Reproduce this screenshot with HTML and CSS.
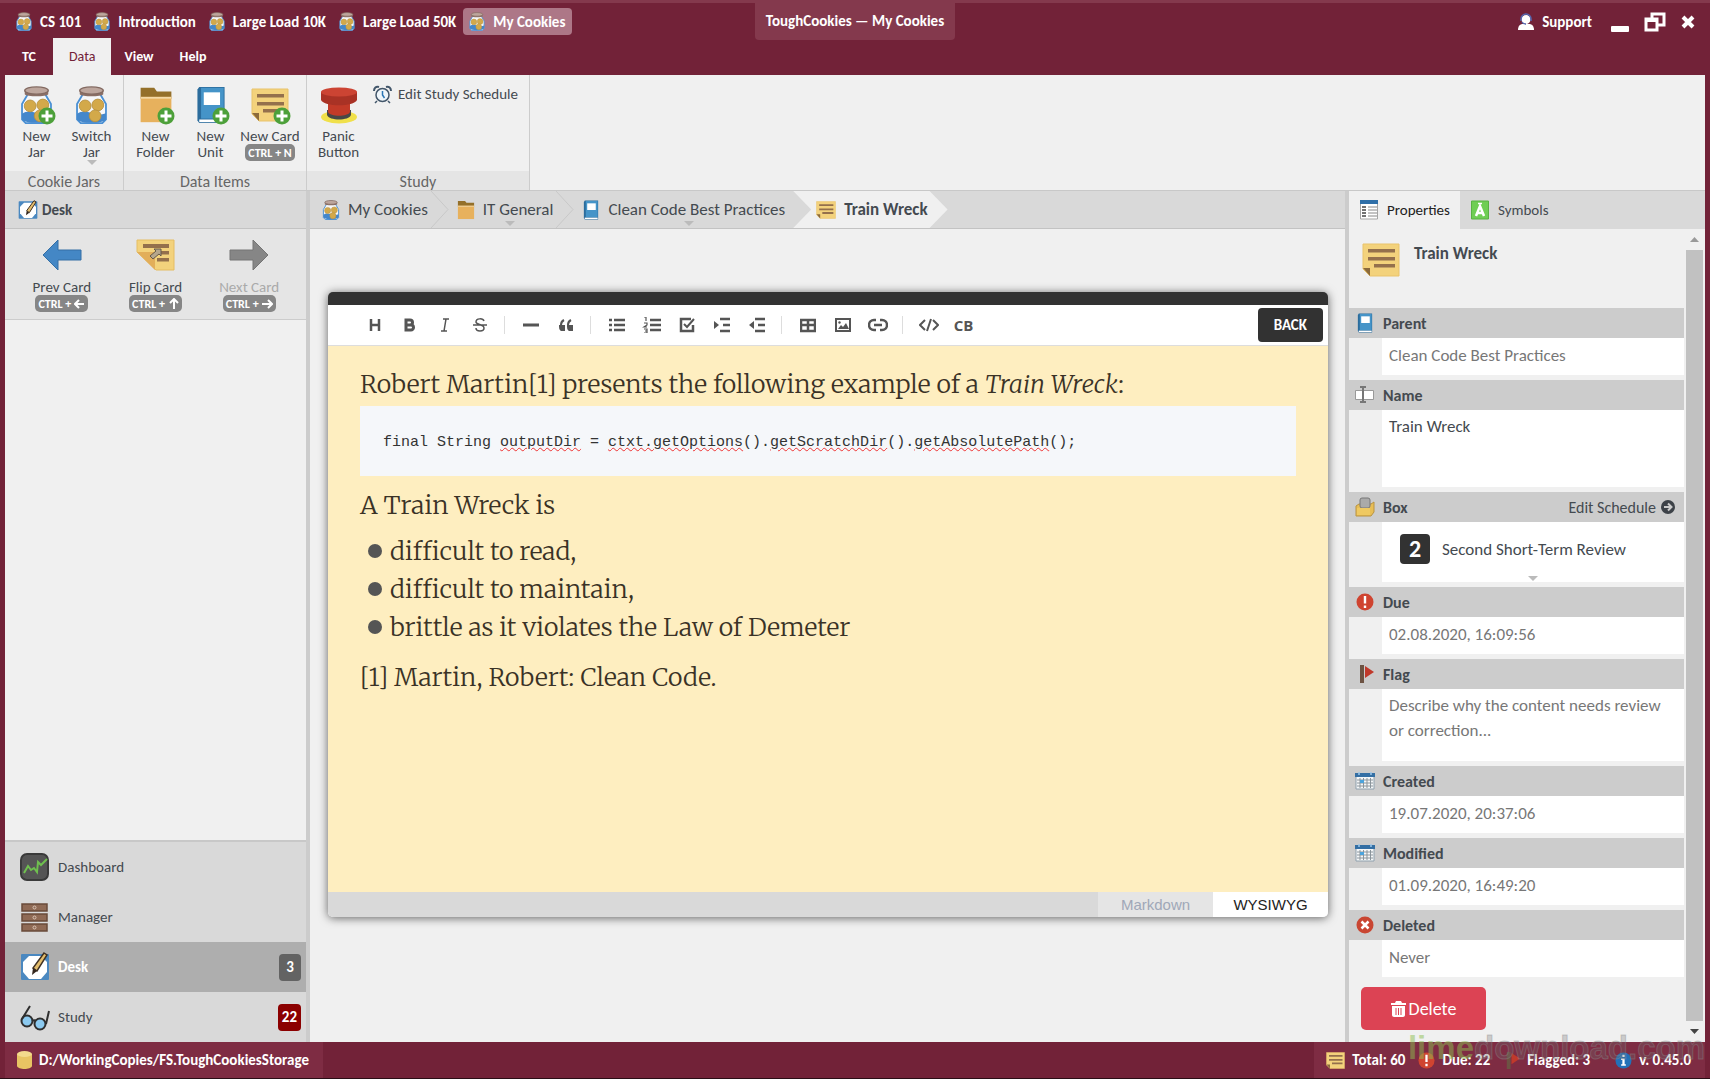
FILE: index.html
```html
<!DOCTYPE html>
<html lang="en">
<head>
  <meta charset="UTF-8" />
  <meta name="viewport" content="width=device-width, initial-scale=1" />
  <title>ToughCookies — My Cookies</title>
  <link rel="stylesheet" href="styles.css">
</head>
<body>
  <!-- shared icons -->
  <svg class="sprite" aria-hidden="true">
    <symbol id="i-jar" viewBox="0 0 36 42">
      <path d="M9 8 2 20v17l4 4h24l4-4V20L27 8z" fill="#f6f7f9" stroke="#4a90d4" stroke-width="2"/>
      <path d="M2 31c5-4 11-3 16-1s11 2 16 0v7c-3 5-29 5-32 0z" fill="#4487cb"/>
      <circle cx="11" cy="22" r="6.500" fill="#d3a94a" stroke="#b89243"/>
      <circle cx="25" cy="21" r="6.500" fill="#d3a94a" stroke="#b89243"/>
      <circle cx="22" cy="33" r="6.500" fill="#d3a94a" stroke="#b89243"/>
      <path d="M5 5v4c2 3 24 3 26 0V5z" fill="#8b6f66"/>
      <ellipse cx="18" cy="5" rx="13" ry="4" fill="#bda69d" stroke="#836a61" stroke-width="1.500"/>
    </symbol>
    <symbol id="i-folder" viewBox="0 0 36 42">
      <path d="M1 2h15l3 4h16v8H1z" fill="#94702a"/>
      <path d="M1 12h34v28H1z" fill="#e7b15d"/>
      <path d="M1 12h34v2H1z" fill="#f3d9a6"/>
    </symbol>
    <symbol id="i-book" viewBox="0 0 32 42">
      <path d="M3 1h28v40H3L1 38V4z" fill="#2b6c9c"/>
      <path d="M5 2h25v34H5z" fill="#4594c8"/>
      <path d="M3 37h27v3H3z" fill="#fff"/>
      <path d="M8 7h18v14H8z" fill="#fff"/>
    </symbol>
    <symbol id="i-card" viewBox="0 0 38 34">
      <path d="M1 1h36v32H8l-7-7z" fill="#f3d27c" stroke="#e9c36a"/>
      <path d="M1 25h7v8z" fill="#8b6a3b"/>
      <path d="M6 6h27v3.500H6zM6 14h27v3.500H6zM12 21h21v3.500H12z" fill="#94704c"/>
    </symbol>
    <symbol id="i-plus" viewBox="0 0 18 18">
      <circle cx="9" cy="9" r="8.500" fill="#4da03a"/>
      <path d="M7.500 3.500h3v4h4v3h-4v4h-3v-4h-4v-3h4z" fill="#fff"/>
    </symbol>
    <symbol id="i-desk" viewBox="0 0 30 30">
      <rect x="1" y="2" width="28" height="26" rx="1" fill="#4a88c0"/>
      <path d="M9 4h12l6 6v10l-6 7H9l-6-7V10z" fill="#fff"/>
      <path d="m24 1 3 2-10 16-4-3z" fill="#e3bd6c" stroke="#3f3023" stroke-width="1.500"/>
      <path d="m13 16 4 3-5 4z" fill="#33261d"/>
    </symbol>
    <symbol id="i-alert" viewBox="0 0 18 18">
      <circle cx="9" cy="9" r="8.500" fill="#cf4430"/>
      <path d="M7.800 3h2.400v7.500H7.800zM7.800 12.500h2.400V15H7.800z" fill="#fff"/>
    </symbol>
    <symbol id="i-flag" viewBox="0 0 18 18">
      <path d="M4 0h4v18H4z" fill="#6d5343"/>
      <path d="M9 1v12l9-6z" fill="#c0392b"/>
    </symbol>
    <symbol id="i-calendar" viewBox="0 0 20 18">
      <path d="M1 4h18v13H1z" fill="#f5f7f8" stroke="#8fa0ad"/>
      <path d="M0 1h20v4H0z" fill="#346fa4"/>
      <path d="M4 0v3M16 0v3" stroke="#9cc8ea" stroke-width="1.500"/>
      <path d="M2 8h16M2 11h16M2 14h16M5 6v10M8.500 6v10M12 6v10M15.500 6v10" stroke="#8b959c" stroke-width="1"/>
      <path d="M5 8h4v3H5z" fill="#4ba3dc"/>
    </symbol>
  </svg>

  <div class="app">
    <header class="titlebar">
      <nav class="jars" aria-label="Open jars">
        <button class="jar"><svg class="jar-icon"><use href="#i-jar"/></svg>CS 101</button>
        <button class="jar"><svg class="jar-icon"><use href="#i-jar"/></svg>Introduction</button>
        <button class="jar"><svg class="jar-icon"><use href="#i-jar"/></svg>Large Load 10K</button>
        <button class="jar"><svg class="jar-icon"><use href="#i-jar"/></svg>Large Load 50K</button>
        <button class="jar active"><svg class="jar-icon"><use href="#i-jar"/></svg>My Cookies</button>
      </nav>
      <h1 class="window-title">ToughCookies — My Cookies</h1>
      <div class="window-tools">
        <button class="support">
          <svg width="16" height="18" viewBox="0 0 16 18"><path d="M0 17c0-4 2-6 5-6h6c3 0 5 2 5 6z" fill="#fff"/><circle cx="8" cy="6.500" r="4.500" fill="#fff"/><path d="M3 8V6a5 5 0 0 1 10 0v2M4 9c1 2 2 2 4 2" fill="none" stroke="#5668b0" stroke-width="1.500"/></svg>
          Support
        </button>
        <button class="win" aria-label="Minimize"><svg width="18" height="20"><rect y="14" width="18" height="6" rx="1" fill="#fff"/></svg></button>
        <button class="win" aria-label="Restore"><svg width="22" height="20" viewBox="0 0 22 20"><path d="M8 5.500V2h12v11h-6M2 7h11v11H2z" fill="none" stroke="#fff" stroke-width="3"/><path d="M2 6h11v4H2z" fill="#fff"/></svg></button>
        <button class="win" aria-label="Close"><svg width="14" height="14" viewBox="0 0 14 14"><path d="m2 2 10 10M12 2 2 12" stroke="#fff" stroke-width="4"/></svg></button>
      </div>
    </header>

    <nav class="menu">
      <button class="menu-item">TC</button>
      <button class="menu-item active">Data</button>
      <button class="menu-item">View</button>
      <button class="menu-item">Help</button>
    </nav>

    <div class="ribbon">
      <section class="group">
        <div class="tools">
          <button class="tool"><span class="tool-icon"><svg width="33" height="38"><use href="#i-jar"/></svg><svg class="plus"><use href="#i-plus"/></svg></span>New<br>Jar</button>
          <button class="tool"><span class="tool-icon"><svg width="33" height="38"><use href="#i-jar"/></svg></span>Switch<br>Jar<span class="caret"></span></button>
        </div>
        <h2 class="group-name">Cookie Jars</h2>
      </section>
      <section class="group">
        <div class="tools">
          <button class="tool"><span class="tool-icon"><svg width="34" height="38"><use href="#i-folder"/></svg><svg class="plus"><use href="#i-plus"/></svg></span>New<br>Folder</button>
          <button class="tool"><span class="tool-icon"><svg width="30" height="38"><use href="#i-book"/></svg><svg class="plus"><use href="#i-plus"/></svg></span>New<br>Unit</button>
          <button class="tool wide"><span class="tool-icon"><svg width="38" height="34"><use href="#i-card"/></svg><svg class="plus"><use href="#i-plus"/></svg></span>New Card<kbd>CTRL + N</kbd></button>
        </div>
        <h2 class="group-name">Data Items</h2>
      </section>
      <section class="group">
        <div class="tools">
          <button class="tool"><span class="tool-icon">
            <svg width="38" height="38" viewBox="0 0 38 38"><ellipse cx="19" cy="31" rx="18" ry="6.500" fill="#f0e04a"/><path d="M7 24v5c2 6 22 6 24 0v-5z" fill="#474747"/><path d="M8 15v11c2 5 20 5 22 0V15z" fill="#c23a28"/><path d="M1 6v8c3 7 33 7 36 0V6z" fill="#a93225"/><ellipse cx="19" cy="6" rx="18" ry="4.500" fill="#cc4433"/></svg>
          </span>Panic<br>Button</button>
          <button class="tool-line">
            <svg width="19" height="19" viewBox="0 0 19 19" fill="none"><circle cx="9.500" cy="10" r="6.500" fill="#eef5fa" stroke="#42566a" stroke-width="1.500"/><path d="M9.500 6v4l2 3" stroke="#2a75b5" stroke-width="1.500"/><path d="M1 6c0-3 2-5 5-4M18 6c0-3-2-5-5-4" stroke="#42566a" stroke-width="2"/><path d="m4 16-2 2M15 16l2 2" stroke="#42566a" stroke-width="1.500"/></svg>
            Edit Study Schedule
          </button>
        </div>
        <h2 class="group-name">Study</h2>
      </section>
    </div>

    <div class="workspace">
      <aside class="sidebar">
        <h2 class="pane-head"><svg width="20" height="20"><use href="#i-desk"/></svg>Desk</h2>
        <div class="card-nav">
          <button class="step">
            <svg width="40" height="32" viewBox="0 0 40 32"><path d="M1 16 16 1v10h23v10H16v10z" fill="#4487c5" stroke="#356fa5"/></svg>
            Prev Card<kbd>CTRL + <svg class="key"><path d="M10 6H1M5 2 1 6l4 4"/></svg></kbd>
          </button>
          <button class="step">
            <svg width="40" height="32" viewBox="0 0 40 32"><path d="M1 1h37v30H20L1 13z" fill="#f3d27c" stroke="#e5bd62"/><path d="M7 5h26v4H7zM20 12h13v3.500H20zM21 19h12v3.500H21z" fill="#94704c"/><path d="M1 13h18v18z" fill="#e2ae5a"/><path d="m14 17 6-5-2-2h7v7l-2-2-6 5z" fill="#b5a68c" stroke="#65594a"/></svg>
            Flip Card<kbd>CTRL + <svg class="key"><path d="M6 11V1M2 5l4-4 4 4"/></svg></kbd>
          </button>
          <button class="step" disabled>
            <svg width="40" height="32" viewBox="0 0 40 32"><path d="M39 16 24 1v10H1v10h23v10z" fill="#868686" stroke="#747474"/></svg>
            Next Card<kbd>CTRL + <svg class="key"><path d="M0 6h10M6 2l4 4-4 4"/></svg></kbd>
          </button>
        </div>
        <nav class="places">
          <a class="place" href="#"><svg width="30" height="30" viewBox="0 0 30 30"><rect x="1" y="2" width="27" height="26" rx="6" fill="#555" stroke="#3a3a3a" stroke-width="2"/><path d="m4 21 4-7 3 4 3-2 3 4 1-10 3 3 6-6" fill="none" stroke="#6fc04f" stroke-width="2"/></svg>Dashboard</a>
          <a class="place" href="#"><svg width="30" height="30" viewBox="0 0 30 30" fill="#8f6a55" stroke="#6a4b3a" stroke-width="1.500"><path d="M2 2h25v7H2zM2 12h25v7H2zM2 22h25v7H2z"/><g fill="#8f6a55" stroke="#d9c3b4" stroke-width="1"><circle cx="14.500" cy="5.500" r="1.500"/><circle cx="14.500" cy="15.500" r="1.500"/><circle cx="14.500" cy="25.500" r="1.500"/></g></svg>Manager</a>
          <a class="place active" href="#"><svg width="30" height="30"><use href="#i-desk"/></svg>Desk<span class="count">3</span></a>
          <a class="place" href="#"><svg width="30" height="30" viewBox="0 0 30 30" fill="none" stroke="#2f2f2f" stroke-width="2"><circle cx="7" cy="19" r="5.500" fill="#8ccaf0"/><circle cx="20" cy="22" r="5.500" fill="#8ccaf0"/><path d="m2 17 8-13M26 22l3-13M12 19c2-1 3-1 4 0"/></svg>Study<span class="count due">22</span></a>
        </nav>
      </aside>

      <main class="center">
        <nav class="crumbs" aria-label="Breadcrumb">
          <a class="crumb" href="#"><svg width="18" height="20"><use href="#i-jar"/></svg>My Cookies</a>
          <svg class="chevron" viewBox="0 0 18 37"><path d="M0 0l17 18.500L0 37"/></svg>
          <a class="crumb has-menu" href="#"><svg width="18" height="20"><use href="#i-folder"/></svg>IT General</a>
          <svg class="chevron" viewBox="0 0 18 37"><path d="M0 0l17 18.500L0 37"/></svg>
          <a class="crumb has-menu" href="#"><svg width="18" height="20"><use href="#i-book"/></svg>Clean Code Best Practices</a>
          <a class="crumb current" href="#" aria-current="page"><svg width="20" height="20"><use href="#i-card"/></svg>Train Wreck</a>
        </nav>

        <div class="stage">
          <section class="editor">
            <div class="toolbar">
              <button class="fmt" aria-label="Heading"><svg viewBox="0 0 16 16"><path d="M4 2v12M12 2v12M4 8h8" stroke-width="2.500"/></svg></button>
              <button class="fmt" aria-label="Bold"><svg viewBox="0 0 16 16"><path d="M4 3v10h5a2.500 2.500 0 0 0 0-5H4h4a2.500 2.500 0 0 0 0-5z" stroke-width="3"/></svg></button>
              <button class="fmt" aria-label="Italic"><svg viewBox="0 0 16 16"><path d="M6 2h6M4 14h6M9 2 7 14" stroke-width="1.500"/></svg></button>
              <button class="fmt" aria-label="Strike"><svg viewBox="0 0 16 16"><path d="M12 4c-1-3-8-3-8 1 0 3 8 2 8 6 0 4-8 4-8 0M1 8h14" stroke-width="1.500"/></svg></button>
              <span class="sep"></span>
              <button class="fmt" aria-label="Line"><svg viewBox="0 0 16 16"><path d="M0 8h16" stroke-width="3"/></svg></button>
              <button class="fmt" aria-label="Blockquote"><svg viewBox="0 0 16 16"><path d="M6 3C4 4 3 6 3 8M13 3c-2 1-3 3-3 5"/><path d="M1 8h6v6H3c-2-1-2-3-2-6zM9 8h6v6h-4c-2-1-2-3-2-6z" fill="#555" stroke="none"/></svg></button>
              <span class="sep"></span>
              <button class="fmt" aria-label="Unordered list"><svg viewBox="0 0 16 16"><path d="M0 3h3M5 3h11M0 8h3M5 8h11M0 13h3M5 13h11" stroke-width="2.500"/></svg></button>
              <button class="fmt" aria-label="Ordered list"><svg class="link" viewBox="0 0 20 16"><path d="M8 3h11M8 8h11M8 13h11" stroke-width="2.500"/><path d="M2 0h2v4M2 6h3v2L2 10h3M2 12h3v4H2M3 14h2" stroke-width="1.200"/></svg></button>
              <button class="fmt" aria-label="Task"><svg viewBox="0 0 16 16"><path d="M14 8v6H2V2h10" stroke-width="2.500"/><path d="m5 7 3 3 7-8"/></svg></button>
              <button class="fmt" aria-label="Indent"><svg viewBox="0 0 16 16"><path d="M6 2h10M9 8h7M6 14h10" stroke-width="2.500"/><path d="m0 4 5 4-5 4z" fill="#555" stroke="none"/></svg></button>
              <button class="fmt" aria-label="Outdent"><svg viewBox="0 0 16 16"><path d="M6 2h10M9 8h7M6 14h10" stroke-width="2.500"/><path d="M5 4 0 8l5 4z" fill="#555" stroke="none"/></svg></button>
              <span class="sep"></span>
              <button class="fmt" aria-label="Table"><svg viewBox="0 0 16 16"><path d="M1 3h14v11H1zM1 8h14M8 2v12" stroke-width="2.500"/></svg></button>
              <button class="fmt" aria-label="Image"><svg viewBox="0 0 16 16"><path d="M1 2h14v12H1z"/><path d="m3 12 3-4 2 2 3-4 3 6z" fill="#555" stroke="none"/><circle cx="4.500" cy="5.500" r="1.200" fill="#555" stroke="none"/></svg></button>
              <button class="fmt" aria-label="Link"><svg class="link" viewBox="0 0 20 16"><path d="M8 3H6a5 5 0 0 0 0 10h2M12 3h2a5 5 0 0 1 0 10h-2M6 8h8" stroke-width="2.500"/></svg></button>
              <span class="sep"></span>
              <button class="fmt" aria-label="Inline code"><svg class="link" viewBox="0 0 20 16"><path d="M6 3 1 8l5 5M14 3l5 5-5 5M12 2 8 14"/></svg></button>
              <button class="fmt cb" aria-label="Code block">CB</button>
              <button class="back">BACK</button>
            </div>

            <div class="page" contenteditable="true" spellcheck="false">
              <p>Robert Martin[1] presents the following example of a <em>Train Wreck</em>:</p>
              <pre>final String <u>outputDir</u> = <u>ctxt.getOptions</u>().<u>getScratchDir</u>().<u>getAbsolutePath</u>();</pre>
              <p>A Train Wreck is</p>
              <ul>
                <li>difficult to read,</li>
                <li>difficult to maintain,</li>
                <li>brittle as it violates the Law of Demeter</li>
              </ul>
              <p>[1] Martin, Robert: Clean Code.</p>
            </div>

            <div class="modes">
              <button class="mode">Markdown</button>
              <button class="mode active">WYSIWYG</button>
            </div>
          </section>
        </div>
      </main>

      <aside class="inspector">
        <div class="tabs">
          <button class="tab active"><svg width="18" height="20" viewBox="0 0 18 20"><path d="M.500 1h17v18H.500z" fill="#fff" stroke="#a5a5a5"/><path d="M0 0h18v4H0z" fill="#2f6fa8"/><path d="M2 7h4M2 10h4M2 13h4M2 16h4" stroke="#444" stroke-width="1.500"/><path d="M8 7h9M8 10h9M8 13h9M8 16h9" stroke="#888"/></svg>Properties</button>
          <button class="tab"><svg width="18" height="20" viewBox="0 0 18 20"><path d="M.500 1h17v18H.500z" fill="#6fce54" stroke="#58b243"/><path d="m5 16 4-10 4 10M6.500 13h5" stroke="#fff" stroke-width="2.500" fill="none"/><path d="M7 3.500h4" stroke="#fff" stroke-width="1.500"/></svg>Symbols</button>
        </div>

        <div class="scroller">
          <form class="fields">
            <div class="summary"><svg width="38" height="34"><use href="#i-card"/></svg><h2>Train Wreck</h2></div>

            <div class="field">
              <div class="field-head"><svg width="20" height="20"><use href="#i-book"/></svg><label for="parent">Parent</label></div>
              <input id="parent" type="text" value="Clean Code Best Practices" readonly>
            </div>
            <div class="field">
              <div class="field-head"><svg width="20" height="18" viewBox="0 0 20 18"><path d="M.500 4.500h18v9H.500z" fill="#fff" stroke="#999"/><path d="M5 1h6M5 16h6M8 1v15" stroke="#777" stroke-width="2"/></svg><label for="name">Name</label></div>
              <textarea id="name" class="name">Train Wreck</textarea>
            </div>
            <div class="field">
              <div class="field-head"><svg width="20" height="20" viewBox="0 0 20 20"><path d="M1 9l3-2h12l3-2v10l-3 4H1z" fill="#e8be55" stroke="#b99340"/><rect x="5" y="1" width="10" height="10" rx="2" fill="#aaa" stroke="#777"/><path d="M2 11h13v7H2z" fill="#efc962"/></svg><label for="box">Box</label>
                <a class="schedule" href="#">Edit Schedule <svg width="14" height="14" viewBox="0 0 14 14"><circle cx="7" cy="7" r="7" fill="#3d4248"/><path d="M3 7h7M7 3.500 10.500 7 7 10.500" fill="none" stroke="#ccc" stroke-width="2"/></svg></a>
              </div>
              <div class="box-value">
                <span class="box-number">2</span>
                <select id="box"><option>Second Short-Term Review</option></select>
                <span class="caret"></span>
              </div>
            </div>
            <div class="field">
              <div class="field-head"><svg width="20" height="18"><use href="#i-alert"/></svg><label for="due">Due</label></div>
              <input id="due" type="text" value="02.08.2020, 16:09:56" readonly>
            </div>
            <div class="field">
              <div class="field-head"><svg width="20" height="18"><use href="#i-flag"/></svg><label for="flag">Flag</label></div>
              <textarea id="flag" class="flag" placeholder="Describe why the content needs review or correction..."></textarea>
            </div>
            <div class="field">
              <div class="field-head"><svg width="20" height="18"><use href="#i-calendar"/></svg><label for="created">Created</label></div>
              <input id="created" type="text" value="19.07.2020, 20:37:06" readonly>
            </div>
            <div class="field">
              <div class="field-head"><svg width="20" height="18"><use href="#i-calendar"/></svg><label for="modified">Modified</label></div>
              <input id="modified" type="text" value="01.09.2020, 16:49:20" readonly>
            </div>
            <div class="field">
              <div class="field-head"><svg width="20" height="18" viewBox="0 0 18 18"><circle cx="9" cy="9" r="8.500" fill="#c94632"/><path d="m5.500 5.500 7 7M12.500 5.500l-7 7" stroke="#fff" stroke-width="2.500"/></svg><label for="deleted">Deleted</label></div>
              <input id="deleted" type="text" value="Never" readonly>
            </div>
            <button class="delete" type="button"><svg width="15" height="16" viewBox="0 0 15 16"><path d="M0 2h4l1-2h5l1 2h4v2H0zM1 5h13v9c0 1-1 2-2 2H3c-1 0-2-1-2-2z" fill="#fff"/><path d="M5 7v7M7.500 7v7M10 7v7" stroke="#dc4354"/></svg>Delete</button>
          </form>
          <div class="scrollbar" aria-hidden="true">
            <svg width="9" height="5"><path d="M0 5h9L4.500 0z" fill="#999"/></svg>
            <span class="thumb"></span>
            <svg width="9" height="5"><path d="M0 0h9L4.500 5z" fill="#444"/></svg>
          </div>
        </div>
      </aside>
    </div>

    <footer class="status">
      <div class="status-part">
        <span class="stat"><svg width="15" height="18" viewBox="0 0 15 18"><path d="M0 3v12c1 4 14 4 15 0V3z" fill="#e8c463"/><ellipse cx="7.500" cy="3" rx="7.500" ry="3" fill="#f3da8d"/></svg>D:/WorkingCopies/FS.ToughCookiesStorage</span>
      </div>
      <div class="status-part">
        <span class="stat"><svg width="19" height="17"><use href="#i-card"/></svg>Total: 60</span>
        <span class="stat"><svg width="17" height="17"><use href="#i-alert"/></svg>Due: 22</span>
        <span class="stat"><svg width="17" height="17"><use href="#i-flag"/></svg>Flagged: 3</span>
        <span class="stat version"><svg width="17" height="17" viewBox="0 0 18 18"><circle cx="9" cy="9" r="8.500" fill="#2271b8"/><path d="M7.800 3h2.400v2.400H7.800zM6.500 7h3.700v6h1.300v1.500h-5V13h1.300V8.500H6.500z" fill="#fff"/></svg>v. 0.45.0</span>
      </div>
      <div class="watermark"><span>lime</span>download.com</div>
    </footer>
  </div>
</body>
</html>
```
FILE: styles.css
```css
* {
  box-sizing: border-box;
}

body {
  margin: 0;
  font-family: Carlito, Lato, sans-serif;
  font-size: 15px;
  color: #444a50;
  background: #722238;
}

h1, h2, p, ul, pre {
  margin: 0;
}

button, input, textarea, select {
  font: inherit;
  color: inherit;
  border: none;
  background: none;
  padding: 0;
  margin: 0;
}

button {
  cursor: pointer;
}

a {
  color: inherit;
  text-decoration: none;
}

svg {
  flex: none;
}

.sprite {
  position: absolute;
  width: 0;
  height: 0;
}

.app {
  display: flex;
  flex-direction: column;
  min-height: 100vh;
  padding: 0 5px;
  border-top: 3px solid #84394d;
  border-bottom: 1px solid #2a0e16;
}

/* title bar */
.titlebar {
  display: grid;
  grid-template-columns: 1fr auto 1fr;
  height: 35px;
  color: #fff;
  font-weight: bold;
}

.jars {
  display: flex;
  padding: 5px;
}

.jar {
  display: flex;
  align-items: center;
  gap: 8px;
  height: 27px;
  padding: 0 7px 0 6px;
  border-radius: 4px;
  white-space: nowrap;
}

.jar.active {
  background: #ad7787;
}

.jar-icon {
  width: 16px;
  height: 19px;
}

.window-title {
  padding: 0 11px;
  font-size: 15px;
  line-height: 37px;
  background: #84394d;
  border-radius: 0 0 4px 4px;
}

.window-tools {
  display: flex;
  justify-content: flex-end;
  align-items: center;
  gap: 15px;
  padding-right: 10px;
}

.support {
  display: flex;
  align-items: center;
  gap: 8px;
  margin-right: 4px;
}

.win {
  display: flex;
}

/* menu */
.menu {
  display: flex;
  height: 37px;
  color: #fff;
  font-size: 14px;
  font-weight: bold;
}

.menu-item {
  min-width: 48px;
  padding: 0 13px;
}

.menu-item.active {
  padding: 0 16px;
  color: #722238;
  background: #f0f0f0;
  font-weight: normal;
}

/* ribbon */
.ribbon {
  display: flex;
  height: 115px;
  background: #f0f0f0;
}

.group {
  display: flex;
  flex-direction: column;
  border-right: 1px solid #ccc;
}

.tools {
  display: flex;
  flex: 1;
  padding: 10px 4px 0;
}

.tool {
  display: flex;
  flex-direction: column;
  align-items: center;
  justify-content: flex-start;
  width: 55px;
  line-height: 16px;
}

.tool.wide {
  width: 64px;
  white-space: nowrap;
}

.tool-icon {
  position: relative;
  display: flex;
  justify-content: center;
  align-items: center;
  min-width: 34px;
  height: 40px;
  margin-bottom: 3px;
}

.plus {
  position: absolute;
  right: -2px;
  bottom: 0;
  width: 18px;
  height: 18px;
}

.caret {
  width: 0;
  border: 5px solid transparent;
  border-top-color: #bbb;
  border-bottom: none;
}

kbd {
  display: inline-flex;
  align-items: center;
  gap: 3px;
  height: 17px;
  padding: 0 3px;
  border-radius: 5px;
  background: #868686;
  color: #fff;
  font-family: inherit;
  font-size: 12px;
  font-weight: bold;
  white-space: nowrap;
}

.tool-line {
  display: flex;
  align-items: center;
  gap: 6px;
  height: 18px;
  margin: 0 7px;
}

.group-name {
  height: 19px;
  background: #e5e5e5;
  color: #666;
  font-size: 16px;
  font-weight: normal;
  line-height: 22px;
  text-align: center;
}

/* workspace */
.workspace {
  display: flex;
  flex: 1;
  border-top: 1px solid #c8c8c8;
  background: #f0f0f0;
}

.sidebar {
  display: flex;
  flex-direction: column;
  width: 305px;
  border-right: 4px solid #ccc;
}

.pane-head {
  display: flex;
  align-items: center;
  gap: 4px;
  height: 38px;
  padding-left: 13px;
  border-bottom: 1px solid #c3c3c3;
  background: #d9d9d9;
  font-size: 15px;
}

.card-nav {
  display: flex;
  height: 91px;
  padding: 10px 10px 0;
  border-bottom: 1px solid #ccc;
  background: #e5e5e5;
}

.step {
  display: flex;
  flex: 1;
  flex-direction: column;
  align-items: center;
  line-height: 16px;
}

.step > svg {
  margin-bottom: 8px;
}

.step:disabled {
  color: #aaa;
}

.key {
  width: 11px;
  height: 12px;
  fill: none;
  stroke: #fff;
  stroke-width: 2;
}

.places {
  margin-top: auto;
  border-top: 2px solid #c8c8c8;
  background: #d9d9d9;
}

.place {
  display: flex;
  align-items: center;
  gap: 8px;
  height: 50px;
  padding: 0 5px 0 15px;
}

.place.active {
  background: #aeaeae;
  color: #fff;
  font-weight: bold;
}

.count {
  min-width: 22px;
  margin-left: auto;
  padding: 0 4px;
  border-radius: 4px;
  background: #636363;
  color: #fff;
  font-weight: bold;
  line-height: 27px;
  text-align: center;
}

.count.due {
  background: #8b0000;
}

/* breadcrumb */
.center {
  display: flex;
  flex: 1;
  flex-direction: column;
  min-width: 0;
}

.crumbs {
  display: flex;
  height: 38px;
  padding-left: 12px;
  border-bottom: 1px solid #c3c3c3;
  background: #d9d9d9;
  font-size: 17px;
}

.crumb {
  position: relative;
  display: flex;
  align-items: center;
  gap: 8px;
  white-space: nowrap;
}

.chevron {
  width: 18px;
  height: 37px;
  margin: 0 8px 0 3px;
  fill: none;
  stroke: #c8c8c8;
}

.has-menu::after {
  content: "";
  position: absolute;
  left: 50%;
  bottom: 2px;
  border: 5px solid transparent;
  border-top-color: #bbb;
  border-bottom: none;
}

.crumb.current {
  margin-left: 8px;
  padding: 0 20px 0 23px;
  background: #f0f0f0;
  font-weight: bold;
  clip-path: polygon(0 0, calc(100% - 18px) 0, 100% 50%, calc(100% - 18px) 100%, 0 100%, 18px 50%);
}

/* editor */
.stage {
  display: flex;
  flex: 1;
  padding: 63px 17px 125px 18px;
}

.editor {
  display: flex;
  flex: 1;
  flex-direction: column;
  border-top: 13px solid #323232;
  border-radius: 5px;
  background: #fff;
  box-shadow: 0 1px 10px rgba(0, 0, 0, 0.6);
  overflow: hidden;
}

.toolbar {
  display: flex;
  align-items: center;
  height: 41px;
  padding: 0 5px 0 29px;
  border-bottom: 1px solid #ddd;
}

.fmt {
  display: flex;
  align-items: center;
  justify-content: center;
  width: 35px;
  height: 35px;
}

.fmt svg {
  width: 16px;
  height: 16px;
  fill: none;
  stroke: #555;
  stroke-width: 2;
}

.fmt .link {
  width: 20px;
}

.cb {
  color: #555;
  font: bold 15px "Open Sans", sans-serif;
}

.sep {
  width: 1px;
  height: 18px;
  margin: 0 8px 0 7px;
  background: #ddd;
}

.back {
  height: 34px;
  margin-left: auto;
  padding: 0 16px;
  border-radius: 4px;
  background: #323232;
  color: #fff;
  font-weight: bold;
}

.page {
  flex: 1;
  padding: 19px 32px;
  background: #feeec0;
  color: #3a3226;
  font-family: Merriweather, "Liberation Serif", serif;
  font-size: 25px;
  font-weight: 300;
  line-height: 38px;
  outline: none;
}

.page pre {
  margin: 3px 0 10px;
  padding: 19px 23px 15px;
  background: #f5f7fa;
  color: #333;
  font-family: "Liberation Mono", monospace;
  font-size: 15px;
  font-weight: normal;
  line-height: 36px;
}

.page u {
  text-decoration: underline wavy #e33 1px;
  text-underline-offset: 1px;
}

.page ul {
  margin: 8px 0 12px;
  padding: 0;
  list-style: none;
}

.page li {
  display: flex;
  align-items: center;
  gap: 8px;
  padding-left: 8px;
}

.page li::before {
  content: "";
  width: 14px;
  height: 14px;
  border-radius: 50%;
  background: #555;
}

.modes {
  display: flex;
  justify-content: flex-end;
  height: 25px;
  background: #d9d9d9;
}

.mode {
  width: 115px;
  background: #e5e5e5;
  color: #a0a8b8;
  font: 15px "Liberation Sans", sans-serif;
}

.mode.active {
  background: #fff;
  color: #222;
}

/* inspector */
.inspector {
  display: flex;
  flex-direction: column;
  width: 360px;
  border-left: 4px solid #ccc;
}

.tabs {
  display: flex;
  height: 38px;
  background: #d9d9d9;
}

.tab {
  display: flex;
  align-items: center;
  gap: 9px;
  padding: 0 10px 0 11px;
}

.tab.active {
  background: #f0f0f0;
  color: #222;
}

.scroller {
  display: flex;
  flex: 1;
}

.fields {
  flex: 1;
  min-width: 0;
}

.summary {
  display: flex;
  gap: 14px;
  height: 79px;
  padding: 14px 13px;
}

.summary h2 {
  font-size: 17px;
  line-height: 22px;
}

.field {
  margin-bottom: 5px;
}

.field-head {
  display: flex;
  align-items: center;
  gap: 8px;
  height: 30px;
  padding: 0 9px 0 6px;
  background: #ccc;
  font-size: 16px;
}

.field-head label {
  font-weight: bold;
}

.schedule {
  display: flex;
  align-items: center;
  gap: 5px;
  margin-left: auto;
}

.field input,
.field textarea {
  display: block;
  width: calc(100% - 33px);
  height: 37px;
  margin-left: 33px;
  padding: 0 7px 2px;
  background: #fff;
  color: #777;
  font-size: 17px;
  line-height: 25px;
  resize: none;
  outline: none;
}

.field textarea {
  padding-top: 4px;
}

.field .name {
  height: 77px;
  color: #444a50;
}

.field .flag {
  height: 72px;
}

.field textarea::placeholder {
  color: #777;
}

.box-value {
  position: relative;
  display: flex;
  align-items: center;
  gap: 12px;
  height: 60px;
  margin-left: 33px;
  padding: 0 18px 6px;
  background: #fff;
}

.box-value select {
  flex: 1;
  appearance: none;
  font-size: 17px;
}

.box-value .caret {
  position: absolute;
  left: 50%;
  bottom: 1px;
  margin-left: -5px;
}

.box-number {
  width: 30px;
  border-radius: 4px;
  background: #323232;
  color: #fff;
  font-size: 24px;
  font-weight: bold;
  line-height: 30px;
  text-align: center;
}

.delete {
  display: flex;
  align-items: center;
  justify-content: center;
  gap: 3px;
  width: 125px;
  height: 43px;
  margin: 10px 12px 5px;
  border-radius: 5px;
  background: #dc4354;
  color: #fff;
  font-size: 18px;
}

.scrollbar {
  display: flex;
  flex-direction: column;
  align-items: center;
  gap: 8px;
  width: 17px;
  margin: 0 2px;
  padding: 8px 0;
}

.thumb {
  flex: 1;
  width: 17px;
  background: #c1c1c1;
}

/* status bar */
.status {
  position: relative;
  display: flex;
  justify-content: space-between;
  height: 36px;
  color: #fff;
  font-weight: bold;
}

.status-part {
  display: flex;
  align-items: center;
  gap: 13px;
  padding: 0 14px 0 12px;
  background: #7e2c43;
}

.stat {
  display: flex;
  align-items: center;
  gap: 7px;
}

.version {
  margin-left: 12px;
}

.watermark {
  position: absolute;
  right: 0;
  bottom: 10px;
  color: rgba(110, 110, 110, 0.3);
  font: bold 33px/40px "Liberation Sans", sans-serif;
  -webkit-text-stroke: 1px rgba(140, 140, 140, 0.4);
  pointer-events: none;
}

.watermark span {
  color: rgba(140, 190, 80, 0.5);
  -webkit-text-stroke: 0;
}
```
